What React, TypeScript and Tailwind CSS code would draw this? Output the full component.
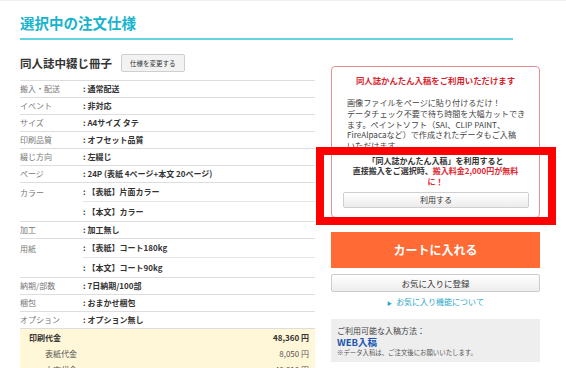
import React from "react";

interface SpecRow {
  label: string;
  values: string[];
}

const specs: SpecRow[] = [
  { label: "搬入・配送", values: ["通常配送"] },
  { label: "イベント", values: ["非対応"] },
  { label: "サイズ", values: ["A4サイズ タテ"] },
  { label: "印刷品質", values: ["オフセット品質"] },
  { label: "綴じ方向", values: ["左綴じ"] },
  { label: "ページ", values: ["24P (表紙 4ページ+本文 20ページ)"] },
  { label: "カラー", values: ["【表紙】片面カラー", "【本文】カラー"] },
  { label: "加工", values: ["加工無し"] },
  { label: "用紙", values: ["【表紙】コート180kg", "【本文】コート90kg"] },
  { label: "納期/部数", values: ["7日納期/100部"] },
  { label: "梱包", values: ["おまかせ梱包"] },
  { label: "オプション", values: ["オプション無し"] },
];

const prices = [
  { label: "印刷代金", amount: "48,360 円", main: true },
  { label: "表紙代金", amount: "8,050 円", main: false },
  { label: "本文代金", amount: "40,310 円", main: false },
];

const SpecTable = () => (
  <div className="border-t border-[#dddddd]">
    {specs.map((row) => (
      <div key={row.label} className="flex border-b border-[#dddddd]">
        <div
          className={`w-[63px] shrink-0 text-[#777] flex items-center ${
            row.values.length > 1 ? "h-[19px] self-start" : "h-[16px]"
          }`}
        >
          {row.label}
        </div>
        <div className="flex-1">
          {row.values.map((v, i) => (
            <div
              key={v}
              className={`flex items-center font-bold text-[#333] ${
                row.values.length > 1 ? "h-[19px]" : "h-[16px]"
              } ${i === 0 && row.values.length > 1 ? "border-b border-[#e4e4e4]" : ""}`}
            >
              : {v.startsWith("【") ? <span className="ml-[2px]">{v}</span> : v}
            </div>
          ))}
        </div>
      </div>
    ))}
  </div>
);

const PriceBox = () => (
  <div className="bg-[#fff7d8] pt-[1px] flex-1">
    {prices.map((p) => (
      <div key={p.label} className="flex items-center justify-between h-[16px] pr-[6px]">
        <span className={p.main ? "pl-[9px] font-bold text-[#333]" : "pl-[25px] text-[#555]"}>
          {p.label}
        </span>
        <span className={p.main ? "font-bold text-[#333]" : "text-[#555]"}>{p.amount}</span>
      </div>
    ))}
  </div>
);

const App = () => {
  return (
    <div
      className="w-[566px] h-[368px] overflow-hidden bg-white border-t border-[#f0f0f0] px-[20px] text-[8px] leading-[10px]"
      style={{ fontFamily: "'Noto Sans CJK JP', 'Liberation Sans', sans-serif" }}
    >
      <div className="w-[493px] pt-[12px] pb-[5px] border-b-2 border-[#63d3e2]">
        <h1 className="text-[14.5px] leading-[20px] font-bold text-[#17b4cd]">選択中の注文仕様</h1>
      </div>

      <div className="flex gap-[16px]">
        {/* left: spec list */}
        <div className="w-[295px] shrink-0 flex flex-col">
          <div className="mt-[14px] mb-[8px] h-[18px] flex items-center gap-[9px]">
            <span className="text-[11.5px] font-bold text-[#333] leading-[18px]">同人誌中綴じ冊子</span>
            <button className="h-[18px] px-[8px] text-[6.5px] text-[#333] bg-[#f2f2f2] border border-[#cfcfcf] rounded-[2px]">
              仕様を変更する
            </button>
          </div>
          <SpecTable />
          <PriceBox />
        </div>

        {/* right: actions */}
        <div className="relative w-[209px] shrink-0 mt-[26px] flex flex-col">
          <div className="border border-[#e38f94] rounded-[4px] pt-[8px] pb-[9px]">
            <p className="text-center font-bold text-[8.4px] leading-[11px] text-[#d8232e]">
              同人誌かんたん入稿をご利用いただけます
            </p>
            <p className="mt-[12px] pl-[15px] text-[8.1px] leading-[10.8px] text-[#444] whitespace-nowrap">
              画像ファイルをページに貼り付けるだけ！
              <br />
              データチェック不要で待ち時間を大幅カットでき
              <br />
              ます。ペイントソフト（SAI、CLIP PAINT、
              <br />
              FireAlpacaなど）で作成されたデータもご入稿
              <br />
              いただけます。
            </p>
            <p className="mt-[4px] text-center font-bold text-[8px] leading-[10.5px] text-[#333] whitespace-nowrap">
              「同人誌かんたん入稿」を利用すると
              <br />
              直接搬入をご選択時、<span className="text-[#e0262f]">搬入料金2,000円が無料</span>
              <br />
              <span className="text-[#e0262f]">に！</span>
            </p>
            <button className="mt-[5px] mx-[11px] w-[186px] h-[16px] text-[8px] text-[#333] bg-gradient-to-b from-white to-[#ececec] border border-[#cfcfcf] rounded-[2px]">
              利用する
            </button>
          </div>

          <button className="mt-[14px] h-[36px] bg-[#ff6a35] text-white font-bold text-[12px]">
            カートに入れる
          </button>
          <button className="mt-[6px] h-[18px] text-[8.5px] text-[#333] bg-gradient-to-b from-white to-[#ededed] border border-[#cccccc] rounded-[2px]">
            お気に入りに登録
          </button>
          <div className="mt-[5px] text-center text-[#2ca7c8] text-[8px] leading-[10px]">
            <span className="text-[5px] mr-[4px] align-middle">▶</span>お気に入り機能について
          </div>

          <div className="mt-[11px] bg-[#eeeeee] px-[6px] pt-[6px] pb-[5px]">
            <p className="text-[8px] leading-[11px] text-[#444]">ご利用可能な入稿方法：</p>
            <p className="text-[9.5px] leading-[12px] font-bold text-[#1b55b1]">WEB入稿</p>
            <p className="text-[6.4px] leading-[9px] text-[#555]">※データ入稿は、ご注文後にお願いいたします。</p>
          </div>

          {/* highlight frame over the promo box */}
          <div className="absolute left-[-15px] top-[81px] w-[240px] h-[78px] border-[8px] border-[#ff0000] pointer-events-none" />
        </div>
      </div>
    </div>
  );
};

export default App;
